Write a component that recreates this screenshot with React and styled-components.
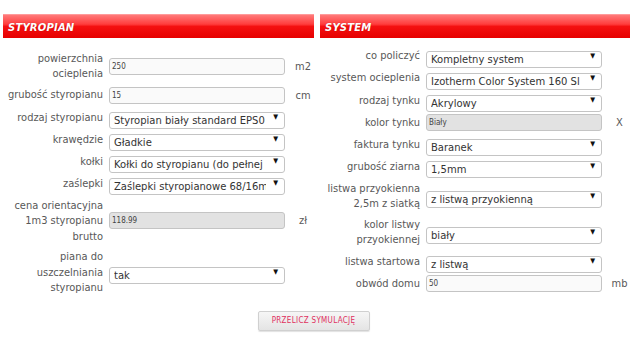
import React from 'react'
import styled, { createGlobalStyle } from 'styled-components'

const GlobalStyle = createGlobalStyle`
  html, body {
    margin: 0;
    padding: 0;
    background: #fff;
  }
  body {
    font-family: "DejaVu Sans Condensed", "DejaVu Sans", sans-serif;
  }
`

const Page = styled.div`
  width: 640px;
  height: 346px;
  box-sizing: border-box;
  padding: 14px 10px 0 3px;
  overflow: hidden;
`

const Columns = styled.div`
  display: flex;
  gap: 6px;
`

const Panel = styled.section`
  width: ${p => p.$width}px;
`

const Header = styled.h2`
  margin: 0;
  height: 24px;
  line-height: 25px;
  padding-left: 5px;
  background: linear-gradient(180deg, #ff7a7a 0%, #ff3c3c 40%, #f41010 50%, #e60000 100%);
  border-top: 1px solid #ff9a9a;
  box-sizing: border-box;
  color: #fff;
  font-family: "DejaVu Sans", sans-serif;
  font-style: italic;
  font-weight: 700;
  font-size: 10px;
  letter-spacing: 0.2px;
  text-shadow: 0 0 1px rgba(120, 0, 0, 0.5);
`

const Fields = styled.div`
  display: flex;
  flex-direction: column;
  gap: 5.2px;
  padding-top: ${p => p.$top}px;
`

const Row = styled.div`
  display: grid;
  grid-template-columns: 100px 176px 1fr;
  column-gap: 6px;
  align-items: center;
`

const Label = styled.label`
  text-align: right;
  font-size: 11px;
  line-height: 15.5px;
  color: #585858;
`

const Unit = styled.span`
  font-size: 11px;
  color: #585858;
  text-align: center;
  padding-left: 1px;
`

const TextInput = styled.input`
  box-sizing: border-box;
  width: 176px;
  height: 17px;
  margin: 0;
  padding: 0 2px;
  border: 1px solid #c4c4c4;
  border-radius: 3px;
  background: ${p => (p.readOnly ? '#e2e2e2' : '#fafafa')};
  font-family: "DejaVu Sans Condensed", "DejaVu Sans", sans-serif;
  font-size: 8px;
  color: #444;
  outline: none;
`

const SelectWrap = styled.div`
  position: relative;
  width: 176px;
  height: 17px;

  &::after {
    content: '▼';
    position: absolute;
    right: 7px;
    top: 4px;
    font-size: 7px;
    line-height: 8px;
    color: #111;
    pointer-events: none;
  }
`

const Select = styled.select`
  appearance: none;
  box-sizing: border-box;
  width: 100%;
  height: 17px;
  margin: 0;
  padding: 0 18px 0 4px;
  border: 1px solid #c4c4c4;
  border-radius: 3px;
  background: #fff;
  font-family: "DejaVu Sans", sans-serif;
  font-size: 10px;
  color: #333;
  outline: none;
`

const Footer = styled.div`
  display: flex;
  justify-content: center;
  padding-right: 6px;
  margin-top: 15px;
`

const Button = styled.button`
  width: 112px;
  height: 20px;
  padding: 0;
  border: 1px solid #d0d0d0;
  border-radius: 2px;
  background: linear-gradient(180deg, #f6f6f6 0%, #e4e4e4 100%);
  box-shadow: 0 1px 1px rgba(0, 0, 0, 0.12);
  color: #e0305e;
  font-family: "DejaVu Sans Condensed", "DejaVu Sans", sans-serif;
  font-size: 8px;
  letter-spacing: 0.3px;
`

const Choice = ({ value }) => (
  <SelectWrap>
    <Select defaultValue={value}>
      <option>{value}</option>
    </Select>
  </SelectWrap>
)

const styropian = [
  { label: ['powierzchnia', 'ocieplenia'], input: '250', unit: 'm2' },
  { label: ['grubość styropianu'], input: '15', unit: 'cm' },
  { label: ['rodzaj styropianu'], select: 'Styropian biały standard EPS0' },
  { label: ['krawędzie'], select: 'Gładkie' },
  { label: ['kołki'], select: 'Kołki do styropianu (do pełnej' },
  { label: ['zaślepki'], select: 'Zaślepki styropianowe 68/16mm' },
  { label: ['cena orientacyjna', '1m3 styropianu', 'brutto'], input: '118.99', readOnly: true, unit: 'zł' },
  { label: ['piana do', 'uszczelniania', 'styropianu'], select: 'tak' },
]

const system = [
  { label: ['co policzyć'], select: 'Kompletny system' },
  { label: ['system ocieplenia'], select: 'Izotherm Color System 160 Sl' },
  { label: ['rodzaj tynku'], select: 'Akrylowy' },
  { label: ['kolor tynku'], input: 'Biały', readOnly: true, unit: 'X' },
  { label: ['faktura tynku'], select: 'Baranek' },
  { label: ['grubość ziarna'], select: '1,5mm' },
  { label: ['listwa przyokienna', '2,5m z siatką'], select: 'z listwą przyokienną' },
  { label: ['kolor listwy', 'przyokiennej'], select: 'biały' },
  { label: ['listwa startowa'], select: 'z listwą' },
  { label: ['obwód domu'], input: '50', unit: 'mb' },
]

function FieldList({ rows, top }) {
  return (
    <Fields $top={top}>
      {rows.map((r, i) => (
        <Row key={i}>
          <Label>
            {r.label.map((line, j) => (
              <div key={j}>{line}</div>
            ))}
          </Label>
          {r.select ? (
            <Choice value={r.select} />
          ) : (
            <TextInput defaultValue={r.input} readOnly={r.readOnly} />
          )}
          <Unit>{r.unit}</Unit>
        </Row>
      ))}
    </Fields>
  )
}

export default function App() {
  return (
    <Page>
      <GlobalStyle />
      <Columns>
        <Panel $width={311}>
          <Header>STYROPIAN</Header>
          <FieldList rows={styropian} top={12.5} />
        </Panel>
        <Panel $width={310}>
          <Header>SYSTEM</Header>
          <FieldList rows={system} top={9.5} />
        </Panel>
      </Columns>
      <Footer>
        <Button>PRZELICZ SYMULACJĘ</Button>
      </Footer>
    </Page>
  )
}
